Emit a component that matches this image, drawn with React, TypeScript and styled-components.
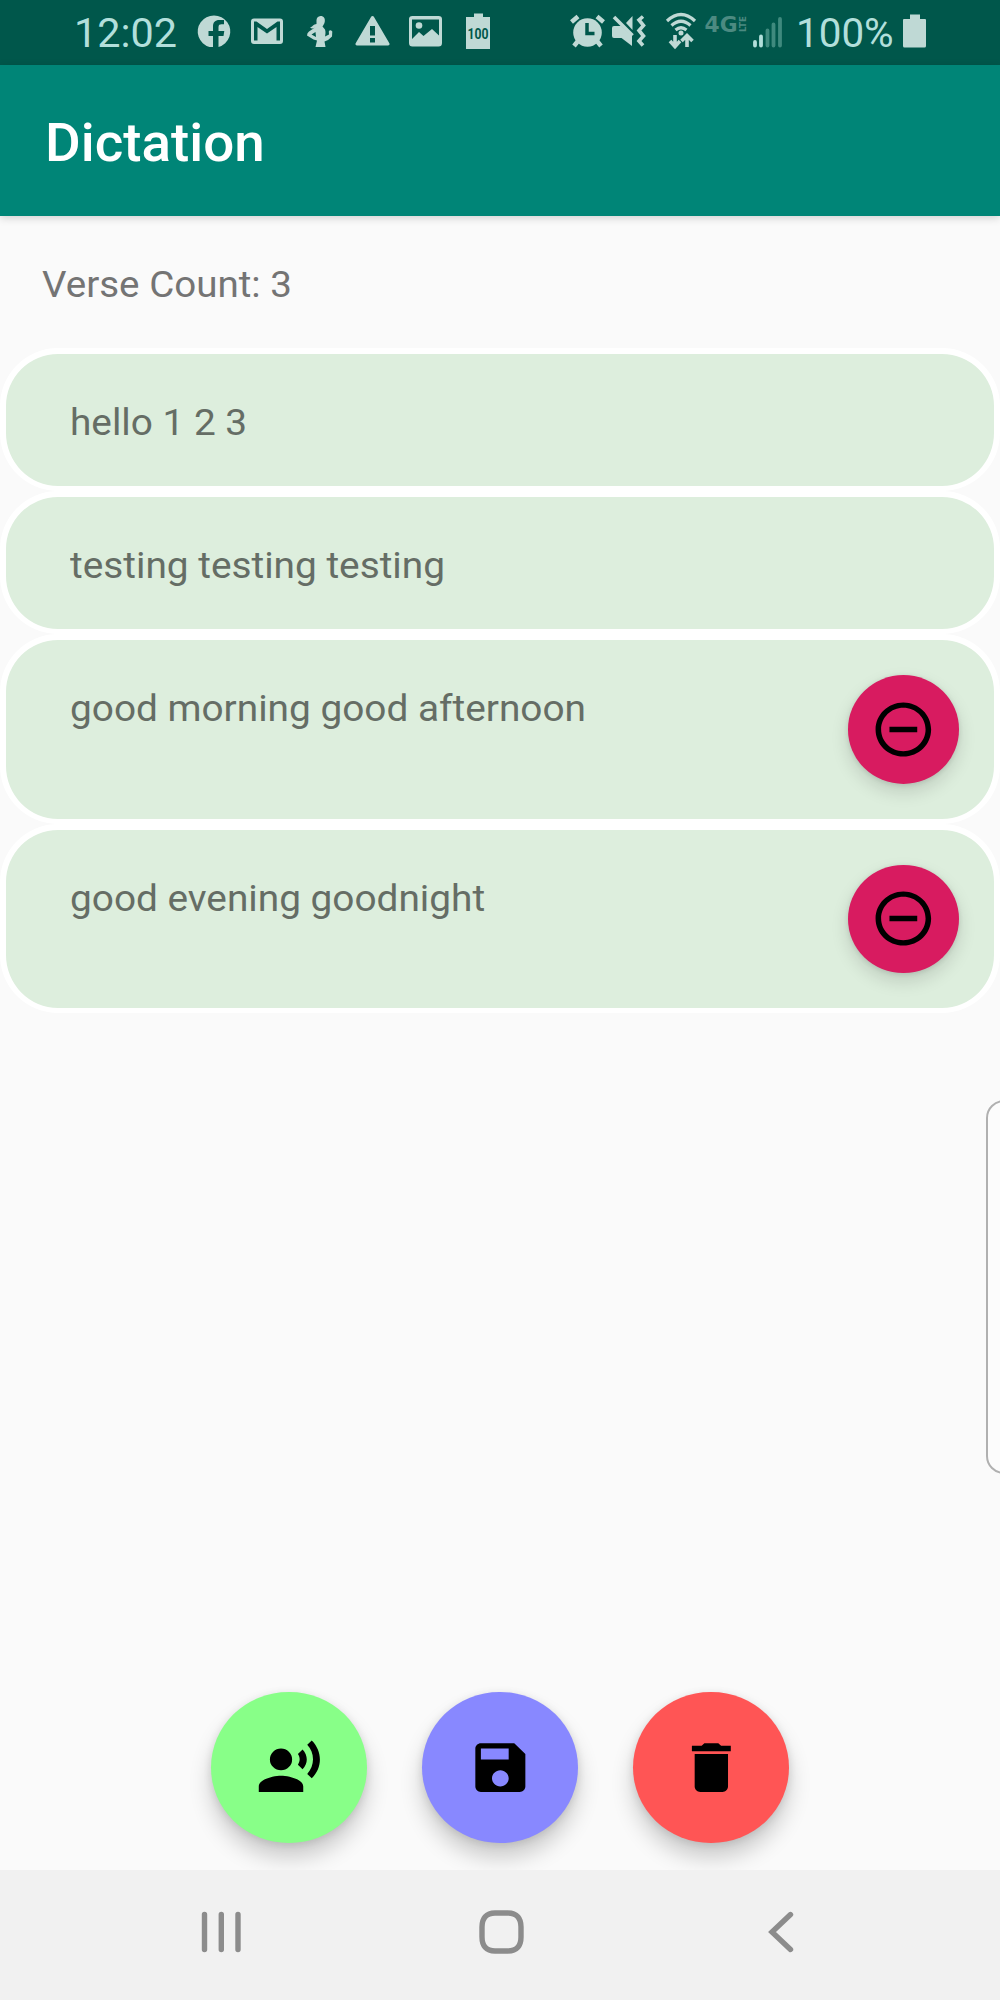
import React from "react";
import styled, { createGlobalStyle } from "styled-components";

const Global = createGlobalStyle`
  * { box-sizing: border-box; }
  body { margin: 0; background: #fafafa; font-family: Roboto, "Noto Sans", sans-serif; }
  svg { display: block; flex: none; }
`;

const Screen = styled.div`
  width: 1000px;
  height: 2000px;
  display: flex;
  flex-direction: column;
  background: #fafafa;
  overflow: hidden;
  position: relative;
`;

const Label = styled.span<{ $size: number; $color: string; $weight?: number; $stretch?: number }>`
  font-size: ${(p) => p.$size}px;
  color: ${(p) => p.$color};
  font-weight: ${(p) => p.$weight ?? 400};
  line-height: 1.172;
  white-space: nowrap;
  transform: scaleX(${(p) => p.$stretch ?? 1.028});
  transform-origin: 0 50%;
`;

const StatusBar = styled.header`
  flex: none;
  height: 65px;
  display: flex;
  justify-content: space-between;
  align-items: center;
  background: #00574b;
  padding: 0 74px 0 74px;
`;

const Clock = styled.div`
  width: 123px;
  padding-top: 2px;
  display: flex;
`;

const StatusGroup = styled.div`
  display: flex;
  align-items: center;
`;

const StatusIcon = styled.svg<{ $w: number; $ml?: number }>`
  width: ${(p) => p.$w}px;
  height: 40px;
  margin-left: ${(p) => p.$ml ?? 0}px;
  fill: #bfd9d5;
  stroke: none;
  overflow: visible;
`;

const Percent = styled.div`
  width: 100px;
  margin-left: 14px;
  padding-top: 2px;
  display: flex;
`;

const AppBar = styled.div`
  flex: none;
  height: 151px;
  display: flex;
  align-items: center;
  padding: 4px 0 0 45px;
  background: #008577;
  box-shadow: 0 2px 8px rgba(0, 0, 0, 0.17);
`;

const CountRow = styled.div`
  flex: none;
  height: 132px;
  display: flex;
  align-items: flex-start;
  padding: 46px 0 0 42px;
`;

const Verses = styled.ul`
  flex: 1;
  list-style: none;
  margin: 0;
  padding: 0;
`;

const Verse = styled.li<{ $tall?: boolean }>`
  height: ${(p) => (p.$tall ? 189.2 : 143.2)}px;
  display: flex;
  justify-content: space-between;
  align-items: flex-start;
  padding: 46px 35.5px 0 64px;
  background: #ddeedd;
  border: solid #fff;
  border-width: 6px 6px 5px;
  border-radius: 58px;
`;

const Fab = styled.button<{ $color: string; $small?: boolean }>`
  flex: none;
  width: ${(p) => (p.$small ? 111 : 155.5)}px;
  height: ${(p) => (p.$small ? 108.5 : 151.5)}px;
  margin-top: ${(p) => (p.$small ? -11 : 0)}px;
  padding: 0;
  border: 0;
  border-radius: 50%;
  display: flex;
  align-items: center;
  justify-content: center;
  background: ${(p) => p.$color};
  box-shadow: ${(p) =>
    p.$small
      ? "0 8px 18px rgba(0,0,0,.14), 0 1px 5px rgba(0,0,0,.11)"
      : "0 15px 22px rgba(0,0,0,.19), 0 2px 9px rgba(0,0,0,.11)"};
`;

const FabIcon = styled.svg`
  width: 66.7px;
  height: 65px;
  fill: #000;
`;

const Actions = styled.div`
  flex: none;
  display: flex;
  justify-content: center;
  gap: 55.5px;
  padding-bottom: 27px;
`;

const NavBar = styled.nav`
  flex: none;
  position: relative;
  height: 130px;
  display: flex;
  align-items: center;
  justify-content: space-between;
  padding: 0 206px 6px 201px;
  background: #f1f1f1;
`;

const NavIcon = styled.svg<{ $mr?: number }>`
  margin-right: ${(p) => p.$mr ?? 0}px;
  fill: none;
  stroke: #8c8c8c;
  stroke-width: 5.4;
`;

const EdgeHandle = styled.div`
  position: absolute;
  right: -26px;
  top: 1100px;
  width: 40px;
  height: 374px;
  border: 2px solid #b0b0b0;
  border-radius: 18px;
  background: #fcfcfc;
`;

const BatteryText = styled.text`
  font: 700 13.8px Roboto, sans-serif;
  fill: #00574b;
`;

const NetworkText = styled.text`
  font-family: "DejaVu Sans", Roboto, sans-serif;
  font-weight: 700;
  fill: #4c8a81;
`;

const ICONS = {
  remove:
    "M7 11v2h10v-2H7zm5-9C6.48 2 2 6.48 2 12s4.48 10 10 10 10-4.48 10-10S17.52 2 12 2zm0 18c-4.41 0-8-3.59-8-8s3.59-8 8-8 8 3.59 8 8-3.59 8-8 8z",
  speak:
    "M9 5a4 4 0 1 0 0 8a4 4 0 1 0 0-8zM9 15c-2.67 0-8 1.34-8 4v2h16v-2c0-2.66-5.33-4-8-4zM16.76 5.36l-1.68 1.69c.84 1.18.84 2.71 0 3.89l1.68 1.69c2.02-2.02 2.02-5.07 0-7.27zM20.07 2l-1.63 1.63c2.77 3.02 2.77 7.56 0 10.74L20.07 16c3.9-3.89 3.91-9.95 0-14z",
  save:
    "M17 3H5c-1.11 0-2 .9-2 2v14c0 1.1.89 2 2 2h14c1.1 0 2-.9 2-2V7l-4-4zm-5 16c-1.66 0-3-1.34-3-3s1.34-3 3-3 3 1.34 3 3-1.34 3-3 3zm3-10H5V5h10v4z",
  trash: "M6 19c0 1.1.9 2 2 2h8c1.1 0 2-.9 2-2V7H6v12zM19 4h-3.5l-1-1h-5l-1 1H5v2h14V4z",
};

function Icon({ d }: { d: string }) {
  return (
    <FabIcon viewBox="0 0 24 24" preserveAspectRatio="none">
      <path d={d} />
    </FabIcon>
  );
}

function Notifications() {
  return (
    <>
      <StatusIcon $w={34} viewBox="0 0 34 40">
        <path d="M13.5 35.4A16.3 16 0 1 1 22.5 35.4V24.5H27.5L28.3 19.5H22.5V15.5C22.5 13.5 23.8 12.8 25.5 12.8H28V8.6H23.5C19 8.6 17 11 17 15V19.5H12.5V24.5H17V35.4Z" transform="translate(-1 -.5)" />
      </StatusIcon>
      <StatusIcon $w={32} $ml={20} viewBox="0 0 32 40">
        <path fillRule="evenodd" d="M3 6.5H29Q32 6.5 32 9.5V29Q32 32 29 32H3Q0 32 0 29V9.500Q0 6.500 3 6.500ZM3 9.500V28.500H6.500V15L16 21.500 25.500 15V28.500H29V9.500H26.500L16 17 5.500 9.500Z" />
      </StatusIcon>
      <StatusIcon $w={26} $ml={24} viewBox="0 0 26 40">
        <path d="M13.500 4C17 4 18.300 6.500 17.800 9.500C17.500 12 16 13.500 15.500 14.500L18 17.500C18.800 20 18.500 22 18 24.500L22 22.500L21.800 19.500Q23 17 25.300 19.500L25 24.500Q22 28 17.500 29.500L18.500 35H8.500L10 28.500L6.500 27.500L0 23.500Q0 21 2 19.500L8 15.500C5.500 17 4.500 16.500 3 15.500C5.500 15 6.500 12 9.500 12L9.500 8Q9.800 4.500 13.500 4ZM8.500 20L4.500 22.500L9 25Z" fillRule="evenodd" />
      </StatusIcon>
      <StatusIcon $w={35} $ml={22} viewBox="0 0 35 40">
        <path fillRule="evenodd" d="M17.500 4Q18.500 4 19 5L34.500 31.500Q35 33.500 33 33.500H2Q0 33.500 .5 31.500L16 5Q16.500 4 17.500 4ZM15 14V23.500H20V14ZM15 26V30.500H20V26Z" />
      </StatusIcon>
      <StatusIcon $w={33} $ml={19} viewBox="0 0 33 40">
        <path fillRule="evenodd" d="M3.500 4H29.500Q33 4 33 7V31Q33 34.500 29.500 34.500H3.500Q0 34.500 0 31V7Q0 4 3.500 4ZM3 7.500V27L10 20L14.500 24L23 17L30 23.500V7.500Z" />
        <circle cx="10" cy="13.500" r="3.300" />
      </StatusIcon>
      <StatusIcon $w={24} $ml={24} viewBox="0 0 24 40">
        <path d="M8 1.500H17V5H24V37H0V5H8Z" />
        <BatteryText x="1.500" y="26.500" textLength="21" lengthAdjust="spacingAndGlyphs">100</BatteryText>
      </StatusIcon>
    </>
  );
}

function SystemStatus() {
  return (
    <>
      <StatusIcon $w={35} viewBox="0 0 35 40">
        <circle cx="17.500" cy="20.500" r="14.300" />
        <path d="M1.500 10L8 4.500M33.500 10L27 4.500M8 29L4 34M27 29L31 34" stroke="#bfd9d5" strokeWidth="4.500" />
        <path d="M17 11V21.500H24.500" fill="none" stroke="#00574b" strokeWidth="3.500" />
      </StatusIcon>
      <StatusIcon $w={34} $ml={7} viewBox="0 0 34 40">
        <path d="M2 14H9L20 24V34L9.500 26H2Q0 26 0 24V16Q0 14 2 14ZM20.500 4V18L14 11Z" />
        <path d="M2 5L20.500 23.500M31 4.500L27 8L31.500 13.500L27 18.500L31.500 24L27 29L31 33.500" fill="none" stroke="#bfd9d5" strokeWidth="3.600" />
      </StatusIcon>
      <StatusIcon $w={30} $ml={20} viewBox="0 0 30 40">
        <path d="M1 9Q15-4 29 9M5.500 13.500Q15 5 24.500 13.500M9.500 18Q15 13.500 20.500 18" fill="none" stroke="#bfd9d5" strokeWidth="3.200" />
        <circle cx="15" cy="21" r="2.500" />
        <path d="M9 23V34M4 29L9 34.500L14 29M21 35V24M15.500 29L21 23.500L26.500 29" fill="none" stroke="#bfd9d5" strokeWidth="3.600" />
      </StatusIcon>
      <StatusIcon $w={41} $ml={9} viewBox="0 0 41 40">
        <NetworkText x="-.5" y="20" fontSize="22" textLength="33" lengthAdjust="spacingAndGlyphs">4G</NetworkText>
        <NetworkText transform="translate(41 20) rotate(-90)" fontSize="9.500" textLength="16" lengthAdjust="spacingAndGlyphs">LTE</NetworkText>
      </StatusIcon>
      <StatusIcon $w={29} $ml={7} viewBox="0 0 29 40">
        <g strokeWidth="3.800" strokeLinecap="round">
          <path d="M2 30V33.500M8 24.500V33.500" stroke="#b2dfdb" />
          <path d="M14.500 18.500V33.500M20.500 12.500V33.500M27 7V33.500" stroke="#3f8a7e" />
        </g>
      </StatusIcon>
    </>
  );
}

const verses = [
  { text: "hello 1 2 3", removable: false },
  { text: "testing testing testing", removable: false },
  { text: "good morning good afternoon", removable: true },
  { text: "good evening goodnight", removable: true },
];

const actions = [
  { name: "Speak", color: "#88ff88", icon: ICONS.speak },
  { name: "Save", color: "#8888ff", icon: ICONS.save },
  { name: "Delete", color: "#ff5555", icon: ICONS.trash },
];

export default function App() {
  return (
    <Screen>
      <Global />
      <StatusBar>
        <StatusGroup>
          <Clock>
            <Label $size={41} $color="#b2dfdb" $stretch={1.01}>12:02</Label>
          </Clock>
          <Notifications />
        </StatusGroup>
        <StatusGroup>
          <SystemStatus />
          <Percent>
            <Label $size={41} $color="#b2dfdb" $stretch={0.985}>100%</Label>
          </Percent>
          <StatusIcon $w={23} $ml={7} viewBox="0 0 23 40">
            <path d="M7 2.500H17V7H22Q23 7 23 8V34Q23 35.500 21.500 35.500H1.500Q0 35.500 0 34V8Q0 7 1 7H7Z" />
          </StatusIcon>
        </StatusGroup>
      </StatusBar>
      <AppBar>
        <Label $size={54} $color="#fff" $weight={500} $stretch={1.014}>Dictation</Label>
      </AppBar>
      <CountRow>
        <Label $size={37.8} $color="#747474" $stretch={1.02}>Verse Count: 3</Label>
      </CountRow>
      <Verses>
        {verses.map((v) => (
          <Verse key={v.text} $tall={v.removable}>
            <Label $size={37.8} $color="#656d65" $stretch={1.026}>{v.text}</Label>
            {v.removable && (
              <Fab $small $color="#d81b60" aria-label="Remove verse">
                <Icon d={ICONS.remove} />
              </Fab>
            )}
          </Verse>
        ))}
      </Verses>
      <Actions>
        {actions.map((a) => (
          <Fab key={a.name} $color={a.color} aria-label={a.name}>
            <Icon d={a.icon} />
          </Fab>
        ))}
      </Actions>
      <NavBar>
        <NavIcon width="40" height="44" viewBox="0 0 40 44" strokeLinecap="round">
          <path d="M3.500 4.500V39.500M20.300 4.500V39.500M37 4.500V39.500" />
        </NavIcon>
        <NavIcon $mr={7} width="45" height="44" viewBox="0 0 45 44">
          <path d="M16 3H29C38 3 42 8.500 42 17V27C42 35.500 38 41 29 41H16C7 41 3 35.500 3 27V17C3 8.500 7 3 16 3Z" />
        </NavIcon>
        <NavIcon width="26" height="44" viewBox="0 0 26 44" strokeLinecap="round">
          <path d="M22.500 4.500L4 22L22.500 39.500" />
        </NavIcon>
      </NavBar>
      <EdgeHandle />
    </Screen>
  );
}
